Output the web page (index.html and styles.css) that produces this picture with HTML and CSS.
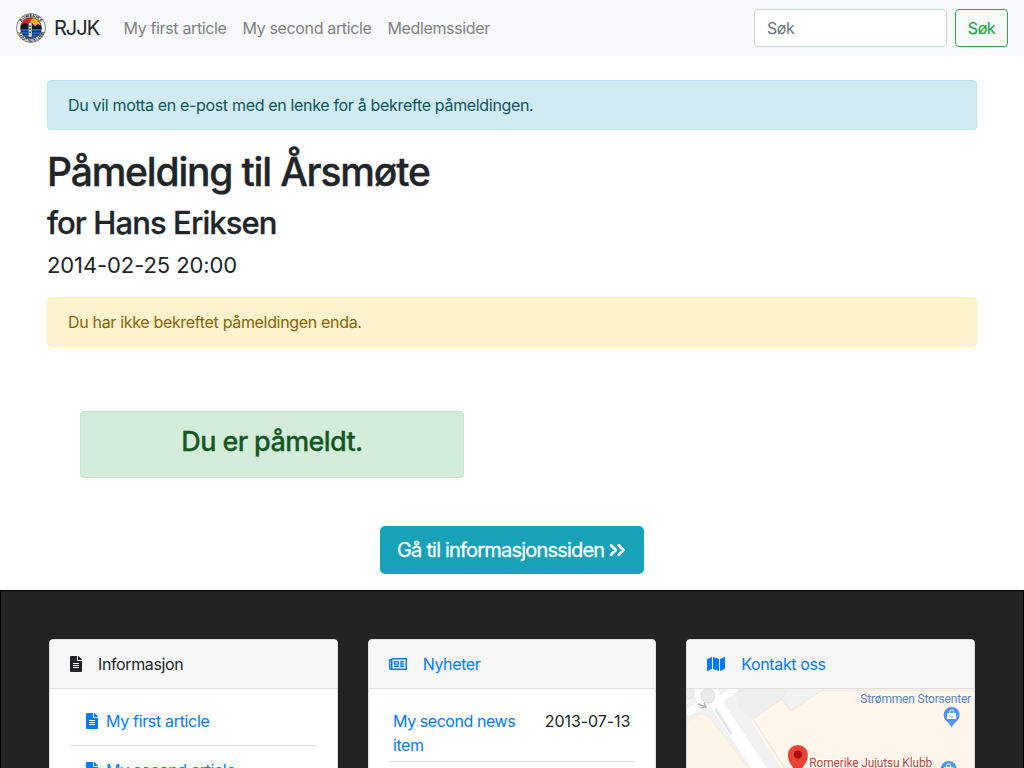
FILE: index.html
```html
<!DOCTYPE html>
<html lang="nb">
<head>
<meta charset="utf-8">
<title>RJJK</title>
<link rel="stylesheet" href="styles.css">
</head>
<body>
<svg class="sprite" aria-hidden="true">
  <symbol id="file" viewBox="0 0 384 512"><path d="M224 136V0H24C10.700 0 0 10.700 0 24v464c0 13.300 10.700 24 24 24h336c13.300 0 24-10.700 24-24V160H248c-13.200 0-24-10.800-24-24zm64 236c0 6.600-5.400 12-12 12H108c-6.600 0-12-5.400-12-12v-8c0-6.600 5.400-12 12-12h168c6.600 0 12 5.400 12 12v8zm0-64c0 6.600-5.400 12-12 12H108c-6.600 0-12-5.400-12-12v-8c0-6.600 5.400-12 12-12h168c6.600 0 12 5.400 12 12v8zm0-72v8c0 6.600-5.400 12-12 12H108c-6.600 0-12-5.400-12-12v-8c0-6.600 5.400-12 12-12h168c6.600 0 12 5.400 12 12zm96-114.100v6.100H256V0h6.100c6.400 0 12.500 2.500 17 7l97.900 98c4.500 4.500 7 10.600 7 16.900z"/></symbol>
  <symbol id="news" viewBox="0 0 576 512"><path d="M552 64H112c-20.900 0-38.700 13.400-45.300 32H24c-13.300 0-24 10.700-24 24v272c0 30.900 25.100 56 56 56h496c13.300 0 24-10.700 24-24V88c0-13.300-10.700-24-24-24zM48 392V144h16v248c0 4.400-3.600 8-8 8s-8-3.600-8-8zm480 8H111.400c.4-2.600.6-5.300.6-8V112h416v288zM172 280h136c6.600 0 12-5.400 12-12v-96c0-6.600-5.400-12-12-12H172c-6.600 0-12 5.400-12 12v96c0 6.600 5.400 12 12 12zm28-80h80v40h-80v-40zm-40 140v-24c0-6.600 5.400-12 12-12h136c6.600 0 12 5.400 12 12v24c0 6.600-5.400 12-12 12H172c-6.600 0-12-5.400-12-12zm192 0v-24c0-6.600 5.400-12 12-12h104c6.600 0 12 5.400 12 12v24c0 6.600-5.400 12-12 12H364c-6.600 0-12-5.400-12-12zm0-144v-24c0-6.600 5.400-12 12-12h104c6.600 0 12 5.400 12 12v24c0 6.600-5.400 12-12 12H364c-6.600 0-12-5.400-12-12zm0 72v-24c0-6.600 5.400-12 12-12h104c6.600 0 12 5.400 12 12v24c0 6.600-5.400 12-12 12H364c-6.600 0-12-5.400-12-12z"/></symbol>
  <symbol id="map" viewBox="0 0 576 512"><path d="M0 117.700v346.300c0 11.300 11.400 19.100 21.900 14.900L160 416V32L20.100 88A32 32 0 0 0 0 117.700zM192 416l192 64V96L192 32v384zM554.100 33.200 416 96v384l139.900-56a32 32 0 0 0 20.100-29.700V48c0-11.300-11.400-19-21.900-14.800z"/></symbol>
</svg>
<div class="page">
  <nav class="navbar">
    <a class="brand">
      <svg class="logo" viewBox="0 0 30 30">
        <defs>
          <clipPath id="disc"><circle cx="15" cy="15" r="10.500"/></clipPath>
          <path id="arc-top" d="M4 15a11 11 0 0 1 22 0"/>
          <path id="arc-bottom" d="M1.300 15.200a13.700 13.700 0 0 0 27.400 0"/>
        </defs>
        <circle class="logo-rim" cx="15" cy="15" r="14.500"/>
        <g clip-path="url(#disc)">
          <path fill="#dc1f1f" d="M4 4h22v22H4z"/>
          <circle fill="#ffb01c" cx="20" cy="10.500" r="6"/>
          <path fill="#111820" d="m4 13 3-2 3-1 3 2 3-2 3 3 3-2 4 2v4H4z"/>
          <path fill="#1461b7" d="M4 16h22v10H4z"/>
          <path fill="#0d3973" d="M4 18h22v1H4zm0 3h22v1H4z"/>
        </g>
        <circle class="logo-ring" cx="15" cy="15" r="10.500"/>
        <path fill="#d8dee4" stroke="#29323a" stroke-width=".5" d="M12.300 10.500l1.900-1.500 1.800 1.500v13.500h-3.700z"/>
        <path fill="#4a545d" d="M13.300 12.500h1.700V14h-1.700zm0 3h1.700V17h-1.700zm0 3h1.700V20h-1.700z"/>
        <text class="logo-text"><textPath href="#arc-top" startOffset="50%">ROMERIKE</textPath></text>
        <text class="logo-text"><textPath href="#arc-bottom" startOffset="50%">JUJUTSU KLUBB</textPath></text>
      </svg>
      <span class="brand-name">RJJK</span>
    </a>
    <div class="nav-links"><a>My first article</a><a>My second article</a><a>Medlemssider</a></div>
    <form class="search"><input class="search-input" type="text" placeholder="Søk"><button class="search-button" type="button">Søk</button></form>
  </nav>
  <main class="main">
    <div class="alert alert-info">Du vil motta en e-post med en lenke for å bekrefte påmeldingen.</div>
    <h1 class="title">Påmelding til Årsmøte</h1>
    <h2 class="subtitle">for Hans Eriksen</h2>
    <p class="date">2014-02-25 20:00</p>
    <div class="alert alert-warning">Du har ikke bekreftet påmeldingen enda.</div>
    <div class="status">Du er påmeldt.</div>
    <a class="cta"><span>Gå til informasjonssiden</span><svg class="chevrons" viewBox="0 0 17 14"><path d="m2 2.200 4.800 4.800L2 11.800M9.700 2.200l4.800 4.800-4.800 4.800"/></svg></a>
  </main>
  <footer class="footer">
    <section class="card">
      <header class="card-header dark"><svg class="icon-file"><use href="#file"/></svg><span>Informasjon</span></header>
      <div class="card-body">
        <a class="article"><svg class="icon-file"><use href="#file"/></svg><span>My first article</span></a>
        <a class="article"><svg class="icon-file"><use href="#file"/></svg><span>My second article</span></a>
      </div>
    </section>
    <section class="card">
      <header class="card-header"><svg class="icon-wide"><use href="#news"/></svg><span>Nyheter</span></header>
      <div class="card-body"><div class="news-row"><a class="news-link">My second news item</a><span class="news-date">2013-07-13</span></div></div>
    </section>
    <section class="card">
      <header class="card-header"><svg class="icon-wide"><use href="#map"/></svg><span>Kontakt oss</span></header>
      <svg class="map" viewBox="0 0 287 100">
        <path fill="#fef5ec" d="M0 0h287v100H0z"/>
        <path fill="#f2f1f1" d="M0 0h134l-30 22-8-12-32 21 42 69H0z"/>
        <path fill="#ebebed" d="M50 0h52l-6 10-32 20-12-10z" opacity=".6"/>
        <path fill="#fdf4e8" stroke="#f3e9de" d="M-1 33 14 24l7 3 20 25 36 48H-1z"/>
        <path fill="#fef5ec" stroke="#f1e3d6" d="m66 30 29-20 9 12 31-21h154v102H113z"/>
        <path class="road" d="m24 7 12 18 14 21 37 56"/>
        <path class="road thin" d="m33 11 16-12M11 17 0 24M6 0l10 11"/>
        <path class="median" d="m29 21 15 23"/>
        <circle class="roundabout" cx="21" cy="7" r="9"/>
        <circle fill="#ececee" stroke="#d9d9dc" cx="21" cy="7" r="7"/>
        <path fill="#ececee" stroke="#dcdde0" d="M-1-1h7c3 6 0 11-7 11z"/>
        <path class="arrow" d="m11 15 8 3m-2-4 2 4-5 1"/>
        <path fill="#e94335" d="M111 85c-4-6-10-11-10-19a10 10 0 0 1 20 0c0 8-6 13-10 19z"/>
        <circle fill="#a60d0d" cx="111" cy="65.500" r="4"/>
        <text class="map-club" x="122.500" y="78" textLength="123">Romerike Jujutsu Klubb</text>
        <text class="map-mall" x="173.500" y="14" textLength="111">Strømmen Storsenter</text>
        <g id="shop"><path fill="#5193f1" d="M265 39c-1-5-8-7-8-13a8 8 0 0 1 16 0c0 6-7 8-8 13z"/><path fill="#fff" d="M260.500 24h9v6h-9z"/><path class="handle" d="M263 24v-1a2 2 0 0 1 4 0v1"/><path class="smile" d="M263 26.500c1 2 3 2 4 0"/></g>
        <use href="#shop" x="-3" y="54"/>
      </svg>
    </section>
  </footer>
</div>
</body>
</html>
```
FILE: styles.css
```css
* { box-sizing: border-box; }
body { margin: 0; color: #212529; background: #fff; font: 400 16px/24px Inter, "Liberation Sans", sans-serif; letter-spacing: -.33px; }
.sprite { display: none; }
.page { height: 768px; overflow: hidden; }
.navbar { display: flex; align-items: center; height: 56px; padding: 0 16px; background: #f8f9fa; }
.brand { display: flex; align-items: center; width: 84px; margin-right: 23.6px; font-size: 20px; gap: 8px; letter-spacing: -1px; }
.logo { width: 30px; height: 30px; flex: none; }
.logo-rim { fill: #f4f4f2; stroke: #666; stroke-width: .8; }
.logo-ring { fill: none; stroke: #333; stroke-width: .6; }
.logo-text { font: 700 4.2px "Liberation Sans", sans-serif; letter-spacing: 0; text-anchor: middle; fill: #111; }
.nav-links { display: flex; gap: 16px; color: #808182; white-space: nowrap; letter-spacing: -.36px; }
.search { display: flex; gap: 8px; margin-left: auto; }
.search-input, .search-button { height: 38px; border-radius: 4px; font: inherit; letter-spacing: -.4px; }
.search-input { width: 193px; padding: 6px 12px; border: 1px solid #ced4da; background: #fff; }
.search-input::placeholder { color: #6c757d; opacity: 1; }
.search-button { width: 53px; padding: 0; border: 1px solid #28a745; color: #28a745; background: transparent; -webkit-text-stroke: .2px; }
.main { display: flex; flex-direction: column; height: 534px; padding: 24px 47px 0; }
.alert { height: 50px; padding: 12px 20px; border: 1px solid; border-radius: 4px; }
.alert-info { margin-bottom: 16px; color: #0c5460; background: #d1ecf1; border-color: #bee5eb; }
.alert-warning { color: #856404; background: #fff3cd; border-color: #ffeeba; }
.title { margin: 0; padding-top: 2px; height: 56px; font-size: 39px; line-height: 48px; font-weight: 500; letter-spacing: -1.18px; -webkit-text-stroke: .4px; }
.subtitle { margin: 0; padding-top: 2px; height: 46px; font-size: 31px; line-height: 38px; font-weight: 500; letter-spacing: -.9px; -webkit-text-stroke: .3px; }
.date { margin: 0; padding-top: 1px; height: 49px; font-size: 22px; line-height: 33px; letter-spacing: -.1px; }
.status { width: 384px; height: 67px; margin: 64px 0 48px 33px; padding: 13px 20px; border: 1px solid #c3e6cb; border-radius: 4px; color: #155724; background: #d4edda; text-align: center; font-size: 27px; line-height: 34px; font-weight: 500; letter-spacing: -.6px; -webkit-text-stroke: .3px; }
.cta { display: flex; align-items: center; align-self: center; gap: 5px; width: 264px; height: 48px; padding-left: 17px; border-radius: 5px; color: #fff; background: #17a2b8; font-size: 20px; letter-spacing: -.8px; white-space: nowrap; -webkit-text-stroke: .3px; }
.chevrons { width: 17px; height: 14px; fill: none; stroke: #fff; stroke-width: 2.8; stroke-linecap: round; stroke-linejoin: round; }
.footer { display: grid; grid-template-columns: repeat(3, 1fr); column-gap: 30px; height: 230px; padding: 48px 48px 0; border: 1px solid #000; background: #222; }
.card { height: 260px; overflow: hidden; border: 1px solid #dfdfdf; border-radius: 4px; background: #fff; }
.card-header { display: flex; align-items: center; height: 49px; padding: 0 20px; border-bottom: 1px solid #dfdfdf; background: #f7f7f7; color: #007bff; gap: 16px; letter-spacing: -.38px; }
.dark { color: #212529; }
.icon-file { width: 12px; height: 16px; flex: none; fill: currentColor; }
.icon-wide { width: 18px; height: 16px; flex: none; fill: currentColor; }
.card-body { padding: 20px; }
.article { display: flex; align-items: center; height: 49px; padding: 0 16px 1px; gap: 8px; color: #007bff; }
.article:first-child { height: 37px; padding-bottom: 12px; border-bottom: 1px solid #dfdfdf; }
.news-row { display: flex; justify-content: space-between; height: 53px; padding: 0 5px 0 4.4px; border-bottom: 1px solid #dfdfdf; }
.news-link { width: 135px; color: #007bff; letter-spacing: -.44px; }
.news-date { letter-spacing: -.07px; }
.map { display: block; width: 100%; }
.road { fill: none; stroke: #fff; stroke-width: 13; }
.thin { stroke-width: 7; }
.median { stroke: #e5e6e9; stroke-width: 3; stroke-linecap: round; }
.roundabout { fill: none; stroke: #fff; stroke-width: 5; }
.arrow { fill: none; stroke: #b4b5b9; stroke-width: 1.3; }
.map-club, .map-mall { font: 400 12px Roboto, sans-serif; letter-spacing: 0; }
.map-club { fill: #bd4034; stroke: #fff; stroke-width: 2px; paint-order: stroke; }
.map-mall { fill: #5585c1; }
.handle { fill: none; stroke: #fff; stroke-width: 1; }
.smile { fill: none; stroke: #5193f1; stroke-width: 1; }
```
